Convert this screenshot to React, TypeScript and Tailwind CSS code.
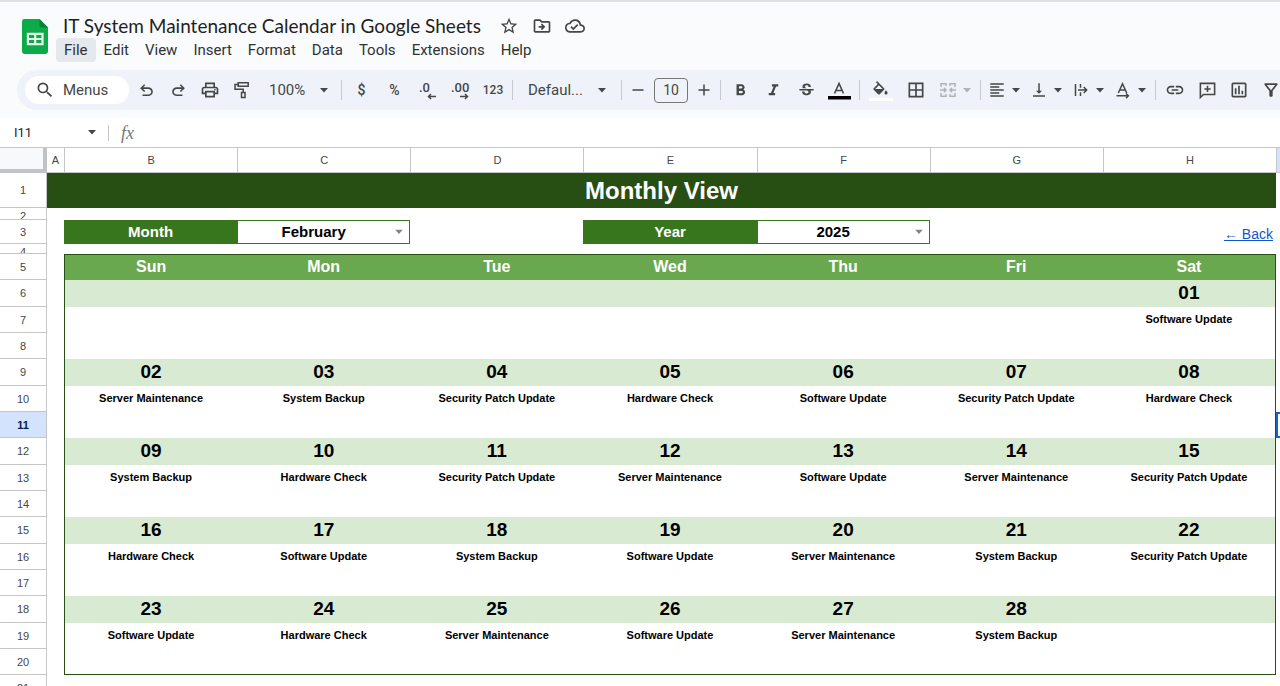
import { useState } from 'react'
import type { ReactNode } from 'react'
import {
  MdBorderAll,
  MdFormatAlignLeft,
  MdFormatBold,
  MdFormatItalic,
  MdLink,
  MdOutlineCloudDone,
  MdOutlineDriveFileMove,
  MdOutlineFilterAlt,
  MdOutlineInsertChart,
  MdOutlinePrint,
  MdSearch,
  MdStarBorder,
  MdStrikethroughS,
  MdVerticalAlignBottom,
} from 'react-icons/md'

const MENUS = ['File', 'Edit', 'View', 'Insert', 'Format', 'Data', 'Tools', 'Extensions', 'Help']
const COLUMNS = ['B', 'C', 'D', 'E', 'F', 'G', 'H']
const DAYS = ['Sun', 'Mon', 'Tue', 'Wed', 'Thu', 'Fri', 'Sat']
const MONTHS = [
  'January', 'February', 'March', 'April', 'May', 'June',
  'July', 'August', 'September', 'October', 'November', 'December',
]
const YEARS = ['2024', '2025', '2026']

const SW = 'Software Update'
const SV = 'Server Maintenance'
const BK = 'System Backup'
const SP = 'Security Patch Update'
const HW = 'Hardware Check'

// first: number of the sheet row that holds the dates of the week
const WEEKS = [
  { first: 6, dates: ['', '', '', '', '', '', '01'], tasks: ['', '', '', '', '', '', SW] },
  { first: 9, dates: ['02', '03', '04', '05', '06', '07', '08'], tasks: [SV, BK, SP, HW, SW, SP, HW] },
  { first: 12, dates: ['09', '10', '11', '12', '13', '14', '15'], tasks: [BK, HW, SP, SV, SW, SV, SP] },
  { first: 15, dates: ['16', '17', '18', '19', '20', '21', '22'], tasks: [HW, SW, BK, SW, SV, BK, SP] },
  { first: 18, dates: ['23', '24', '25', '26', '27', '28', ''], tasks: [SW, HW, SV, SW, SV, BK, ''] },
]

function SheetsLogo() {
  return (
    <svg width="26" height="35" viewBox="0 0 26 35" aria-hidden="true">
      <path d="M2.4 0H17.5L26 8.5V32.6A2.4 2.4 0 0 1 23.6 35H2.4A2.4 2.4 0 0 1 0 32.6V2.4A2.4 2.4 0 0 1 2.4 0Z" fill="#0bab47" />
      <path d="M17.5 0L26 8.5H19.5A2 2 0 0 1 17.5 6.5Z" fill="#07803a" />
      <path
        d="M4.8 13.8H21.6V26.2H4.8ZM7 16V19H12.1V16ZM14.3 16V19H19.4V16ZM7 21.1V24H12.1V21.1ZM14.3 21.1V24H19.4V21.1Z"
        fill="#e6f7ec"
        fillRule="evenodd"
      />
    </svg>
  )
}

function Caret({ className = 'text-[#444746]' }: { className?: string }) {
  return (
    <svg width="10" height="5" viewBox="0 0 10 5" className={`shrink-0 ${className}`} aria-hidden="true">
      <path d="M1 0H9L5 4.5Z" fill="currentColor" />
    </svg>
  )
}

function UndoIcon({ flip = false }: { flip?: boolean }) {
  return (
    <svg width="19" height="19" viewBox="0 -960 960 960" fill="currentColor" className={flip ? '-scale-x-100' : ''}>
      <path d="M280-200v-80h284q63 0 109.5-40T720-420q0-60-46.5-100T564-560H312l104 104-56 56-200-200 200-200 56 56-104 104h252q97 0 169.5 63T800-420q0 94-72.5 157T564-200H280Z" />
    </svg>
  )
}

function PaintIcon() {
  return (
    <svg width="18" height="18" viewBox="0 0 18 18" fill="none" stroke="currentColor" strokeWidth="1.5">
      <path d="M5.2 1.8H15.2V5.3H5.2ZM5.2 3.5H2V8.2H10.2V11.5M8.5 11.5H12V16.5H8.5Z" />
    </svg>
  )
}

function DecimalIcon({ more = false }: { more?: boolean }) {
  return (
    <svg width="20" height="20" viewBox="0 0 20 20" aria-hidden="true">
      <text x={more ? 0 : 1} y="12" fontSize="13" fontWeight="500" fontFamily="Roboto, sans-serif" fill="currentColor">
        {more ? '.00' : '.0'}
      </text>
      <path
        d={more ? 'M9 16.5H16.5M14 14L16.5 16.5L14 19' : 'M18 16.5H10.5M13 14L10.5 16.5L13 19'}
        fill="none"
        stroke="currentColor"
        strokeWidth="1.5"
      />
    </svg>
  )
}

function FillIcon() {
  return (
    <svg width="19" height="18" viewBox="0 0 24 20" fill="currentColor">
      <path d="M16.56 8.94L7.62 0 6.21 1.41l2.38 2.38-5.15 5.15c-.59.59-.59 1.54 0 2.12l5.5 5.5c.29.29.68.44 1.06.44s.77-.15 1.06-.44l5.5-5.5c.59-.58.59-1.53 0-2.12zM5.21 10L10 5.21 14.79 10H5.21zM19 11.5s-2 2.17-2 3.5c0 1.1.9 2 2 2s2-.9 2-2c0-1.33-2-3.5-2-3.5z" />
    </svg>
  )
}

function TextColorIcon() {
  return (
    <svg width="23" height="20" viewBox="0 0 23 20" fill="none">
      <path d="M6.5 13.5L11 3.5L15.5 13.5M8 10.5H14" stroke="currentColor" strokeWidth="1.6" />
      <path d="M0 16H23V19.5H0Z" fill="#000" />
    </svg>
  )
}

function MergeIcon() {
  return (
    <svg width="18" height="18" viewBox="0 0 18 18" fill="none" stroke="currentColor" strokeWidth="1.5">
      <path d="M7 5V2.8H2V6M2 12V15.2H7V13M11 5V2.8H16V6M16 12V15.2H11V13" />
      <path d="M1 9H7M4.8 6.7L7.1 9L4.8 11.3M17 9H11M13.2 6.7L10.9 9L13.2 11.3" />
    </svg>
  )
}

function WrapIcon() {
  return (
    <svg width="18" height="18" viewBox="0 0 18 18" fill="none" stroke="currentColor" strokeWidth="1.5">
      <path d="M3.5 3V15M8.5 3V6.8M8.5 11.2V15M6 9H14.5M11.7 6L14.7 9L11.7 12" />
    </svg>
  )
}

function RotateIcon() {
  return (
    <svg width="18" height="18" viewBox="0 0 18 18" fill="none" stroke="currentColor" strokeWidth="1.5">
      <path d="M4.3 12L8.5 2.8L12.7 12M5.7 9H11.3M2.5 14.8H14M12 12.5L14.4 14.8L12 17.1" />
    </svg>
  )
}

function CommentIcon() {
  return (
    <svg width="19" height="19" viewBox="0 0 24 24" fill="none" stroke="currentColor" strokeWidth="2">
      <path d="M3 3H21V17H7L3 20.8ZM12 6V14M8 10H16" />
    </svg>
  )
}

function Divider() {
  return <div className="mx-[3px] h-5 w-px shrink-0 bg-[#c7c9cc]" />
}

function Tool({ label, width = 'w-8', children }: { label: string; width?: string; children: ReactNode }) {
  return (
    <button
      type="button"
      aria-label={label}
      title={label}
      className={`grid h-7 shrink-0 place-items-center rounded hover:bg-black/5 ${width}`}
    >
      {children}
    </button>
  )
}

function DropTool({ label, muted = false, children }: { label: string; muted?: boolean; children: ReactNode }) {
  const color = muted ? 'text-[#b0b3b6]' : 'text-[#444746]'
  return (
    <button
      type="button"
      aria-label={label}
      title={label}
      className={`flex h-7 w-[42px] shrink-0 items-center gap-[5px] pl-1 ${color}`}
    >
      {children}
      <Caret className={color} />
    </button>
  )
}

function Toolbar() {
  return (
    <div
      role="toolbar"
      aria-label="Main"
      className="my-2 ml-[17px] flex h-10 items-center overflow-hidden rounded-l-full bg-[#eff3f9] pl-2 text-[#444746]"
    >
      <button type="button" className="mr-px flex h-7 w-[104px] shrink-0 items-center gap-2 rounded-full bg-white pl-[10px] text-[15px]">
        <MdSearch size={20} />
        Menus
      </button>
      <Tool label="Undo"><UndoIcon /></Tool>
      <Tool label="Redo"><UndoIcon flip /></Tool>
      <Tool label="Print"><MdOutlinePrint size={20} /></Tool>
      <Tool label="Paint format"><PaintIcon /></Tool>
      <button type="button" aria-label="Zoom" className="flex h-7 w-20 shrink-0 items-center justify-between pr-[9px] pl-[11px] text-[15px]">
        100%
        <Caret />
      </button>
      <Divider />
      <Tool label="Format as currency" width="w-[33px]"><span className="text-sm font-medium">$</span></Tool>
      <Tool label="Format as percent" width="w-[33px]"><span className="text-sm font-medium">%</span></Tool>
      <Tool label="Decrease decimal places" width="w-[33px]"><DecimalIcon /></Tool>
      <Tool label="Increase decimal places" width="w-[33px]"><DecimalIcon more /></Tool>
      <Tool label="More formats"><span className="text-xs font-medium">123</span></Tool>
      <Divider />
      <button type="button" aria-label="Font" className="flex h-7 w-[102px] shrink-0 items-center justify-between pr-[11px] pl-3 text-[15px]">
        Defaul...
        <Caret />
      </button>
      <Divider />
      <Tool label="Decrease font size" width="w-[26px]">
        <svg width="12" height="12" viewBox="0 0 12 12" stroke="currentColor" strokeWidth="1.5"><path d="M0.5 6H11.5" /></svg>
      </Tool>
      <input
        aria-label="Font size"
        defaultValue="10"
        className="mx-[3px] h-[25px] w-[34px] shrink-0 rounded border border-[#747775] bg-transparent text-center text-sm"
      />
      <Tool label="Increase font size" width="w-[26px]">
        <svg width="12" height="12" viewBox="0 0 12 12" stroke="currentColor" strokeWidth="1.5"><path d="M0.5 6H11.5M6 0.5V11.5" /></svg>
      </Tool>
      <Divider />
      <Tool label="Bold" width="w-[33px]"><MdFormatBold size={19} /></Tool>
      <Tool label="Italic" width="w-[33px]"><MdFormatItalic size={19} /></Tool>
      <Tool label="Strikethrough" width="w-[33px]"><MdStrikethroughS size={19} /></Tool>
      <Tool label="Text color" width="w-[33px]"><TextColorIcon /></Tool>
      <Divider />
      <Tool label="Fill color" width="w-[35px]">
        <span className="flex w-6 flex-col items-center border-b-[3px] border-white"><FillIcon /></span>
      </Tool>
      <Tool label="Borders" width="w-[35px]"><MdBorderAll size={20} /></Tool>
      <div className="w-0.5 shrink-0" />
      <DropTool label="Merge cells" muted><MergeIcon /></DropTool>
      <Divider />
      <DropTool label="Horizontal align"><MdFormatAlignLeft size={18} /></DropTool>
      <DropTool label="Vertical align"><MdVerticalAlignBottom size={18} /></DropTool>
      <DropTool label="Text wrapping"><WrapIcon /></DropTool>
      <DropTool label="Text rotation"><RotateIcon /></DropTool>
      <Divider />
      <Tool label="Insert link"><MdLink size={20} /></Tool>
      <Tool label="Insert comment"><CommentIcon /></Tool>
      <Tool label="Insert chart"><MdOutlineInsertChart size={20} /></Tool>
      <Tool label="Create a filter"><MdOutlineFilterAlt size={20} /></Tool>
    </div>
  )
}

function RowHead({ n, height, active = false, align = 'items-center' }: {
  n: number
  height: string
  active?: boolean
  align?: string
}) {
  return (
    <th scope="row" className="p-0 font-normal">
      <div
        className={`flex justify-center overflow-hidden border-r border-b border-[#c4c7c5] text-[11px] leading-4 ${align} ${height} ${
          active ? 'bg-[#d3e3fd] font-bold text-[#041e49]' : 'text-[#444746]'
        }`}
      >
        {n}
      </div>
    </th>
  )
}

function SelectCell({ label, value, options, onChange }: {
  label: string
  value: string
  options: string[]
  onChange: (value: string) => void
}) {
  const id = label.toLowerCase()
  return (
    <>
      <td className="bg-[#38761d] p-0 text-center text-[15px] font-bold text-white">
        <label htmlFor={id}>{label}</label>
      </td>
      <td className="relative border border-[#38761d] p-0">
        <select
          id={id}
          value={value}
          onChange={e => onChange(e.target.value)}
          className="block h-[22px] w-full appearance-none bg-transparent pr-5 text-center text-[15px] font-bold text-black"
        >
          {options.map(o => <option key={o}>{o}</option>)}
        </select>
        <Caret className="pointer-events-none absolute top-1/2 right-[5px] -translate-y-1/2 text-[#80868b]" />
      </td>
    </>
  )
}

// outer frame of the calendar, drawn by its first and last columns
const edge = (i: number) =>
  i === 0 ? 'border-l border-[#274e13]' : i === 6 ? 'border-r border-[#274e13]' : ''

function Sheet() {
  const [month, setMonth] = useState('February')
  const [year, setYear] = useState('2025')

  return (
    <table className="w-full table-fixed border-separate border-spacing-0 font-['Liberation_Sans',Arial,sans-serif]">
      <colgroup>
        <col className="w-[47px]" />
        <col className="w-[17px]" />
        {COLUMNS.map(c => <col key={c} />)}
        <col className="w-1" />
      </colgroup>
      <thead>
        <tr className="h-[25px] text-[11px] text-[#444746]">
          <td className="border-r-4 border-b-4 border-[#c0c3c6] bg-[#f8f9fa] p-0" />
          <th scope="col" className="border-b border-[#c4c7c5] p-0 font-normal">A</th>
          {COLUMNS.map(c => (
            <th key={c} scope="col" className="border-b border-l border-[#c4c7c5] p-0 font-normal">{c}</th>
          ))}
          <th scope="col" aria-label="I" className="border-b border-l border-[#c4c7c5] bg-[#d3e3fd] p-0" />
        </tr>
      </thead>
      <tbody>
        <tr>
          <RowHead n={1} height="h-[35px]" />
          <td colSpan={8} className="bg-[#274e13] p-0 text-center text-2xl leading-8 font-bold text-white">Monthly View</td>
          <td className="p-0" />
        </tr>
        <tr>
          <RowHead n={2} height="h-3" align="items-start" />
          <td colSpan={9} className="p-0" />
        </tr>
        <tr>
          <RowHead n={3} height="h-6" />
          <td className="p-0" />
          <SelectCell label="Month" value={month} options={MONTHS} onChange={setMonth} />
          <td className="p-0" />
          <SelectCell label="Year" value={year} options={YEARS} onChange={setYear} />
          <td className="p-0" />
          <td className="p-0 pr-[3px] text-right align-bottom text-sm leading-5">
            <a href="#back" className="text-[#1155cc] underline">← Back</a>
          </td>
          <td className="p-0" />
        </tr>
        <tr>
          <RowHead n={4} height="h-[10px]" align="items-start" />
          <td colSpan={9} className="p-0" />
        </tr>
        <tr>
          <RowHead n={5} height="h-[26px]" />
          <td className="p-0" />
          {DAYS.map((d, i) => (
            <td key={d} className={`border-t border-t-[#274e13] bg-[#6aa84f] p-0 text-center align-top text-base leading-6 font-bold text-white ${edge(i)}`}>
              {d}
            </td>
          ))}
          <td className="p-0" />
        </tr>
        {WEEKS.map(week => [
          <tr key={week.first}>
            <RowHead n={week.first} height="h-[27px]" />
            <td className="p-0" />
            {week.dates.map((d, i) => (
              <td key={i} className={`bg-[#d9ead3] p-0 text-center align-top text-[19px] leading-[26px] font-bold text-black ${edge(i)}`}>{d}</td>
            ))}
            <td className="p-0" />
          </tr>,
          <tr key={week.first + 1}>
            <RowHead n={week.first + 1} height="h-[26px]" />
            <td className="p-0" />
            {week.tasks.map((t, i) => (
              <td key={i} className={`p-0 text-center align-top text-[11px] leading-6 font-bold text-black ${edge(i)}`}>{t}</td>
            ))}
            <td className="p-0" />
          </tr>,
          <tr key={week.first + 2}>
            <RowHead n={week.first + 2} height="h-[26px]" active={week.first === 9} />
            <td className="p-0" />
            {DAYS.map((d, i) => (
              <td key={d} className={`p-0 ${edge(i)} ${week.first === 18 ? 'border-b border-b-[#274e13]' : ''}`} />
            ))}
            <td className={`p-0 ${week.first === 9 ? 'border-y-2 border-l-2 border-[#1a5fd0]' : ''}`} />
          </tr>,
        ])}
        <tr>
          <RowHead n={21} height="h-[26px]" />
          <td colSpan={9} className="p-0" />
        </tr>
      </tbody>
    </table>
  )
}

export default function App() {
  return (
    <div className="flex h-screen flex-col overflow-hidden bg-white font-[Roboto,sans-serif]">
      <header className="shrink-0 overflow-hidden border-t-2 border-[#dfe1e5] bg-[#f9fbfd]">
        <div className="flex pt-3 pl-[22px]">
          <div className="pt-[5px]"><SheetsLogo /></div>
          <div className="ml-2">
            <div className="flex h-6 items-center pl-[7px] text-[#444746]">
              <h1 className="font-[Lato,sans-serif] text-[19px] leading-6 whitespace-nowrap text-[#1f1f1f]">
                IT System Maintenance Calendar in Google Sheets
              </h1>
              <div className="ml-[18px] flex gap-[13px]">
                <button type="button" aria-label="Star"><MdStarBorder size={20} /></button>
                <button type="button" aria-label="Move"><MdOutlineDriveFileMove size={20} /></button>
                <button type="button" aria-label="See document status"><MdOutlineCloudDone size={20} /></button>
              </div>
            </div>
            <nav aria-label="Menu bar" className="flex h-6">
              {MENUS.map(m => (
                <button
                  key={m}
                  type="button"
                  className={`h-6 rounded px-2 text-[15px] leading-6 text-[#303233] ${m === 'File' ? 'bg-[#e5e8ec]' : ''}`}
                >
                  {m}
                </button>
              ))}
            </nav>
          </div>
        </div>
        <Toolbar />
      </header>

      <div className="flex h-[30px] shrink-0 items-center border-b border-[#c4c7c5] text-[#444746]">
        <input aria-label="Name box" defaultValue="I11" className="w-[87px] bg-transparent pl-[14px] text-[13px] text-[#1f1f1f]" />
        <Caret />
        <div className="mr-3 ml-[11px] h-4 w-px bg-[#c7c9cc]" />
        <label htmlFor="formula" className="font-['Liberation_Serif',serif] text-lg text-[#747775] italic">fx</label>
        <input id="formula" className="min-w-0 flex-1 bg-transparent px-2 text-[13px]" />
      </div>

      <main className="min-h-0 flex-1 overflow-hidden">
        <Sheet />
      </main>
    </div>
  )
}
